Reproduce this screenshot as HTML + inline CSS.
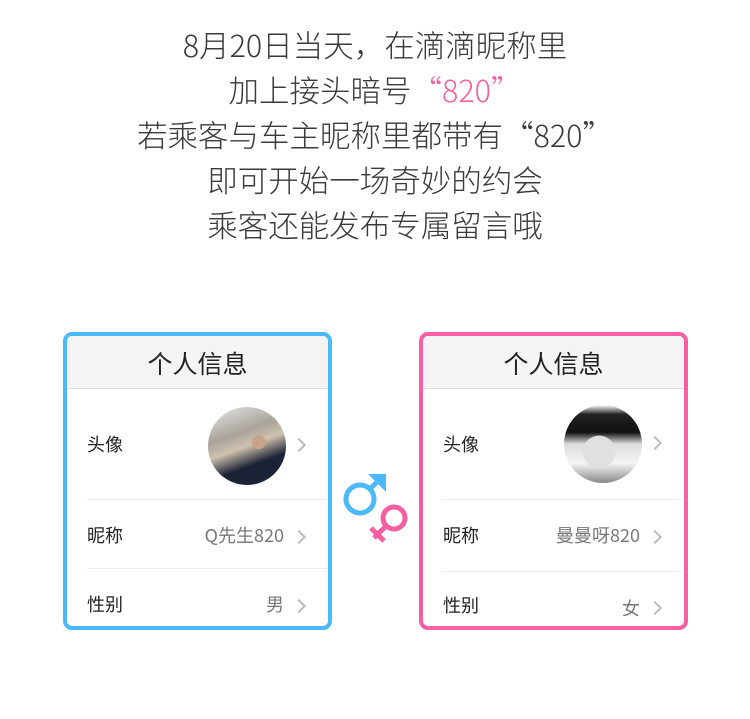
<!DOCTYPE html>
<html><head><meta charset="utf-8"><style>
*{margin:0;padding:0;box-sizing:border-box}
body{width:750px;height:719px;background:#fff;position:relative;overflow:hidden;font-family:"Noto Sans CJK SC","Liberation Sans",sans-serif;color:#333}
.t{position:absolute;left:0;width:750px;text-align:center;font-size:30.5px;line-height:45px;top:22px;color:#3a3a3a;font-weight:300}
.pk{color:#f5609e}
.card{position:absolute;top:332px;width:269px;height:298px;border:4px solid;border-radius:9px;overflow:hidden;background:#fff}
.hd{height:53px;background:#f4f4f4;border-bottom:1px solid #ddd;text-align:center;font-size:25px;line-height:54px;color:#222;font-weight:400}
.row{position:absolute;left:20px;right:0;border-top:1px solid #eee}
.lb{position:absolute;left:20px;font-size:18px;color:#222;font-weight:400;line-height:24px}
.v{position:absolute;right:44px;font-size:18px;color:#777;font-weight:400;line-height:24px}
.ch{position:absolute;right:24px;width:10px;height:10px;border-right:2px solid #bbb;border-top:2px solid #bbb;transform:rotate(45deg)}
.av{position:absolute;border-radius:50%}
</style></head><body>
<div class="t">8月20日当天，在滴滴昵称里<br>加上接头暗号<span class="pk">“820”</span><br>若乘客与车主昵称里都带有“820”<br>即可开始一场奇妙的约会<br>乘客还能发布专属留言哦</div>

<div class="card" style="left:63px;border-color:#4bb8f7">
<div class="hd">个人信息</div>
<div class="lb" style="top:96px">头像</div>
<div class="av" style="left:141px;top:71px;width:78px;height:78px;background:radial-gradient(circle at 65% 45%,#c9a48a 0 10%,transparent 11%),linear-gradient(160deg,#e8e8e8 0%,#a9a39a 35%,#cfc2ae 50%,#1c2235 70%,#1c2235 100%)"></div>
<div class="ch" style="top:104px"></div>
<div class="row" style="top:163px"></div>
<div class="lb" style="top:187px">昵称</div><div class="v" style="top:187px">Q先生820</div><div class="ch" style="top:196px"></div>
<div class="row" style="top:232px"></div>
<div class="lb" style="top:256px">性别</div><div class="v" style="top:256px">男</div><div class="ch" style="top:265px"></div>
</div>

<div class="card" style="left:419px;border-color:#f75fa3">
<div class="hd">个人信息</div>
<div class="lb" style="top:96px">头像</div>
<div class="av" style="left:141px;top:69px;width:78px;height:78px;background:radial-gradient(circle at 45% 60%,#e0e0e0 0 25%,transparent 26%),linear-gradient(180deg,#fff 0%,#222 12%,#111 35%,#ddd 50%,#f4f4f4 75%,#888 100%)"></div>
<div class="ch" style="top:102px"></div>
<div class="row" style="top:163px"></div>
<div class="lb" style="top:187px">昵称</div><div class="v" style="top:187px">曼曼呀820</div><div class="ch" style="top:196px"></div>
<div class="row" style="top:235px"></div>
<div class="lb" style="top:257px">性别</div><div class="v" style="top:260px">女</div><div class="ch" style="top:267px"></div>
</div>

<svg style="position:absolute;left:330px;top:460px" width="100" height="90" viewBox="0 0 100 90">
<circle cx="30" cy="39" r="14" fill="none" stroke="#4bb8f7" stroke-width="5"/>
<path d="M40 29 L51 18" stroke="#4bb8f7" stroke-width="5"/>
<path d="M38 14 L56 14 L56 32 Z" fill="#4bb8f7"/>
<circle cx="64" cy="58" r="11" fill="none" stroke="#f75fa3" stroke-width="5"/>
<path d="M56 66 L44 78 M41 68 L54 81" stroke="#f75fa3" stroke-width="5"/>
</svg>
</body></html>
